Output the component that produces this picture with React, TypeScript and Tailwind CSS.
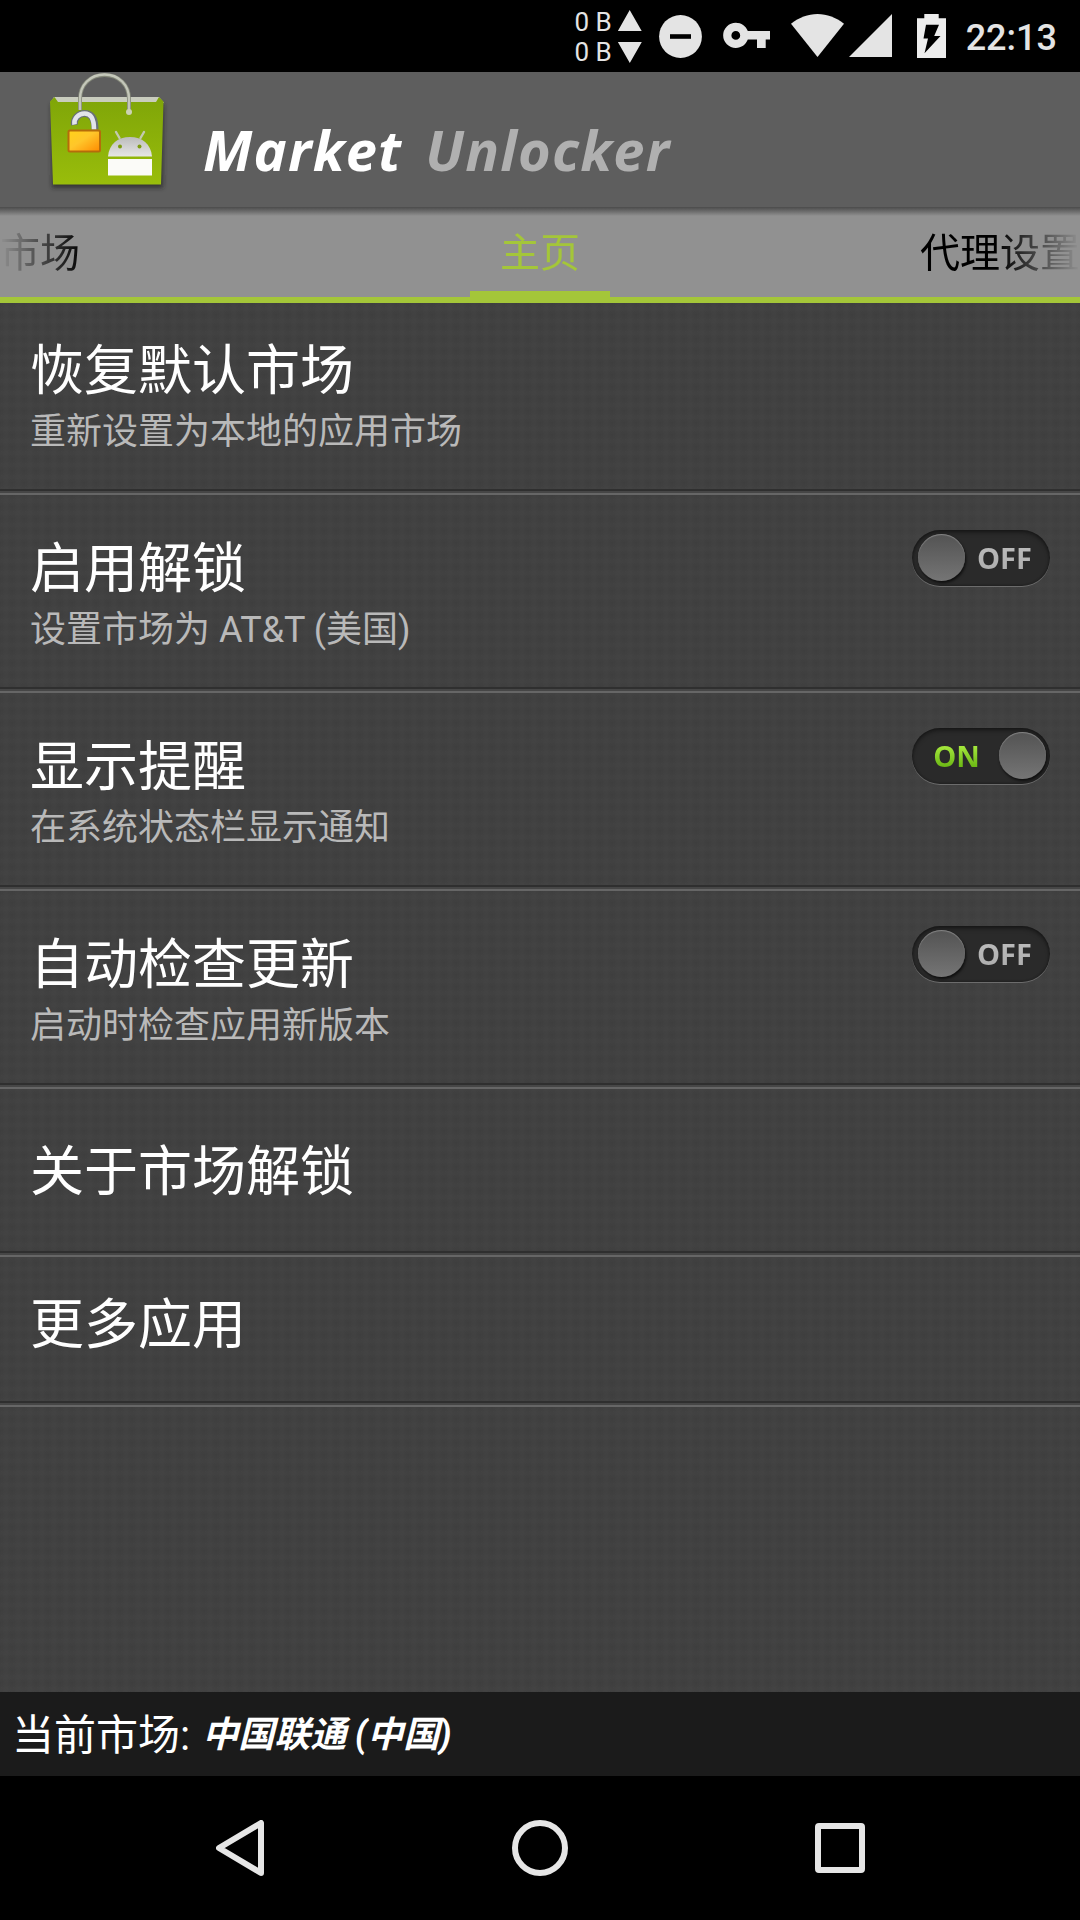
import { useState } from 'react'

type SettingRowProps = {
  title: string
  summary?: string
  checked?: boolean
  onToggle?: () => void
  className: string
}

function ToggleSwitch({ checked, onToggle }: { checked: boolean; onToggle?: () => void }) {
  return (
    <button
      type="button"
      role="switch"
      aria-checked={checked}
      onClick={onToggle}
      className={`flex h-14 w-[138px] shrink-0 items-center rounded-full bg-[#2a2a2a] shadow-[inset_0_3px_4px_rgba(0,0,0,0.35),inset_0_0_2px_1px_rgba(0,0,0,0.2),0_1px_0_#6c6c6c] ${checked ? 'flex-row-reverse pr-1 pl-1' : 'px-1.5'}`}
    >
      <span className="-mt-0.5 h-[47px] w-[47px] shrink-0 rounded-full bg-linear-to-b from-[#535353] to-[#757575] shadow-[1px_2px_3px_rgba(0,0,0,0.7),inset_0_1px_1px_#858585]" />
      <span
        className={`flex-1 bg-linear-to-b bg-clip-text font-['Open_Sans'] text-[29px] leading-10 font-bold text-transparent ${checked ? '-translate-x-px from-[#a5e83c] from-25% to-[#68b510] to-80%' : 'from-[#bfbfbf] to-[#aaaaaa]'}`}
      >
        {checked ? 'ON' : 'OFF'}
      </span>
    </button>
  )
}

function SettingRow({ title, summary, checked, onToggle, className }: SettingRowProps) {
  return (
    <li>
      <div className={`flex justify-between pr-[30px] pl-[30px] ${className}`}>
        <div>
          <h2 className="text-[54px] leading-[64px] text-white">{title}</h2>
          {summary && <p className="text-[36px] leading-[56px] text-[#b9b9b9]">{summary}</p>}
        </div>
        {checked !== undefined && (
          <div className="pt-[35px]">
            <ToggleSwitch checked={checked} onToggle={onToggle} />
          </div>
        )}
      </div>
      <div className="h-0.5 bg-[#2f2f2f]" />
      <div className="h-0.5 bg-[#464646]" />
      <div className="h-0.5 bg-[#666666]" />
    </li>
  )
}

function StatusBar() {
  return (
    <header className="flex h-[72px] items-center justify-end bg-black pr-[23px] text-[#e4e4e4]">
      <div className="flex flex-col pt-0.5 text-[26px] leading-[30px]">
        <span>0 B</span>
        <span>0 B</span>
      </div>
      <svg viewBox="617 0 24 72" className="ml-1.5 h-[72px] w-6" fill="currentColor" aria-hidden="true">
        <path d="M628.7 10 640.7 31H616.8ZM616.8 42h24l-12 21Z" />
      </svg>
      <svg viewBox="658 0 44 72" className="ml-[17px] h-[72px] w-11" aria-hidden="true">
        <circle cx="679.5" cy="36.5" r="21.4" fill="currentColor" />
        <path d="M669 36.5h21" stroke="#000" strokeWidth="4.6" />
      </svg>
      <svg viewBox="722 0 47 72" className="ml-5 h-[72px] w-[47px]" fill="currentColor" aria-hidden="true">
        <path
          fillRule="evenodd"
          d="M734.8 22.7c5.6 0 10 3.2 12 8.3H769v8.6h-4.3v8.4H756v-8.4h-9.2c-2 5.2-6.4 8.4-12 8.4a12.65 12.65 0 0 1 0-25.3Zm0 8.3a4.4 4.4 0 1 0 0 8.8 4.4 4.4 0 0 0 0-8.8Z"
        />
      </svg>
      <svg viewBox="790 0 54 72" className="ml-[21px] h-[72px] w-[54px]" fill="currentColor" aria-hidden="true">
        <path d="M790 23.8C798 17.5 807 14 816.5 14S835 17.5 843 23.8L816.5 57Z" />
      </svg>
      <svg viewBox="848 0 43 72" className="ml-1 h-[72px] w-[43px]" fill="currentColor" aria-hidden="true">
        <path d="M891 14v43h-43Z" />
      </svg>
      <svg viewBox="916 0 29 72" className="ml-[25px] h-[72px] w-[29px]" aria-hidden="true">
        <path d="M923.3 14h14.4v4.3h7.3v39.7h-29V18.3h7.3Z" fill="#ededed" />
        <path d="M925 24.8h13l-4.8 11.2h6.3l-16 17.2 3.5-14.7h-4.5Z" fill="#000" />
      </svg>
      <time className="ml-5 pt-1 text-[36px] font-medium">22:13</time>
    </header>
  )
}

function BagLogo() {
  return (
    <svg viewBox="40 72 140 125" className="h-[125px] w-[140px]" aria-hidden="true">
      <defs>
        <linearGradient id="bag" x1="0" y1="0" x2="0" y2="1">
          <stop offset="0" stopColor="#7fa508" />
          <stop offset="1" stopColor="#99bd0b" />
        </linearGradient>
        <linearGradient id="lock" x1="0" y1="0" x2="1" y2="1">
          <stop offset="0" stopColor="#ffd21a" />
          <stop offset="0.45" stopColor="#ffc62a" />
          <stop offset="1" stopColor="#ff8a00" />
        </linearGradient>
        <linearGradient id="robot" x1="0" y1="0" x2="0" y2="1">
          <stop offset="0" stopColor="#bcbcbc" />
          <stop offset="1" stopColor="#e6e6e6" />
        </linearGradient>
        <filter id="soft" x="-20%" y="-20%" width="140%" height="140%">
          <feGaussianBlur stdDeviation="2" />
        </filter>
      </defs>
      <path d="M51 104h113l-1 84H52Z" fill="#222" opacity="0.65" filter="url(#soft)" />
      <path d="M54 97h105l5 6H50Z" fill="#c9ccbe" />
      <path d="M50 101.5 54.500 97l3.500 5h98l3-5 4.500 4.500-2.500 83H53Z" fill="url(#bag)" />
      <path d="M80 110V99C80 85 90 75 104.500 75S129 85 129 99v12" fill="none" stroke="#85897a" strokeWidth="4" />
      <path d="M80 110V99C80 85 90 74.500 104.500 74.500S129 85 129 99v12" fill="none" stroke="#c4c7ba" strokeWidth="2.4" />
      <circle cx="129" cy="112" r="3" fill="#ccd2b4" />
      <path d="M74.500 125c-1-6 3.500-11.500 10-11.500 7 0 10.500 5 10.500 16" fill="none" stroke="#697078" strokeWidth="7" />
      <path d="M74.500 124.500c-1-6 4-11 10-11 6.500 0 9.500 4.500 9.500 16" fill="none" stroke="#e2e4ea" strokeWidth="4.6" />
      <rect x="68.500" y="130.500" width="31.500" height="21" rx="1.500" fill="url(#lock)" stroke="#b56c0a" strokeWidth="2" />
      <path d="m116 132 3.500 6M144 132l-3.500 6" stroke="#c3c9b0" strokeWidth="2.4" strokeLinecap="round" />
      <path d="M108 156.500C109 144 118 137 130 137s21 7 22 19.500Z" fill="url(#robot)" />
      <circle cx="120" cy="146.500" r="2" fill="#7d9c12" />
      <circle cx="139.500" cy="146.500" r="2" fill="#7d9c12" />
      <path d="M108 159h44v16.500h-44Z" fill="#fbfbf8" />
    </svg>
  )
}

function TabStrip() {
  return (
    <nav className="flex h-24 flex-col justify-between border-b-[6px] border-[#a4c639] bg-[#919191] bg-linear-to-b from-[#4b4b4b] to-[#919191] to-[9px]">
      <div className="flex h-[84px] items-center justify-between pt-[9px] text-[40px] text-black mask-[linear-gradient(to_right,transparent,black_84px,black_996px,transparent)]">
        <span className="w-40">市场</span>
        <span className="text-[#a4c639]">主页</span>
        <span className="w-40 whitespace-nowrap">代理设置</span>
      </div>
      <div className="h-1.5 w-[140px] self-center bg-[#a4c639]" />
    </nav>
  )
}

export default function App() {
  const [unlockEnabled, setUnlockEnabled] = useState(false)
  const [noticeEnabled, setNoticeEnabled] = useState(true)
  const [autoUpdate, setAutoUpdate] = useState(false)

  return (
    <div className="flex h-[1920px] w-[1080px] flex-col overflow-hidden bg-black font-[Roboto,'Noto_Sans_CJK_SC',sans-serif]">
      <StatusBar />

      <div className="flex h-[135px] bg-[#5e5e5e] pl-10">
        <BagLogo />
        <h1 className="flex gap-[23px] pt-[37px] pl-[23px] font-['Open_Sans'] text-[56px] leading-[80px] font-bold tracking-[1.2px] whitespace-nowrap text-white italic">
          <span>Market</span>
          <span className="text-[#b0b0b0]">Unlocker</span>
        </h1>
      </div>

      <TabStrip />

      <ul className="flex-1 bg-[#414141] bg-[radial-gradient(circle,#434343_0,transparent_5px),radial-gradient(circle,#3e3e3e_0,transparent_5px)] bg-[length:12px_12px] bg-[position:0_0,6px_6px]">
        <SettingRow title="恢复默认市场" summary="重新设置为本地的应用市场" className="h-[186px] pt-[37px]" />
        <SettingRow
          title="启用解锁"
          summary="设置市场为 AT&T (美国)"
          checked={unlockEnabled}
          onToggle={() => setUnlockEnabled(!unlockEnabled)}
          className="h-48 [&>div:first-child]:pt-[43px]"
        />
        <SettingRow
          title="显示提醒"
          summary="在系统状态栏显示通知"
          checked={noticeEnabled}
          onToggle={() => setNoticeEnabled(!noticeEnabled)}
          className="h-48 [&>div:first-child]:pt-[43px]"
        />
        <SettingRow
          title="自动检查更新"
          summary="启动时检查应用新版本"
          checked={autoUpdate}
          onToggle={() => setAutoUpdate(!autoUpdate)}
          className="h-48 [&>div:first-child]:pt-[43px]"
        />
        <SettingRow title="关于市场解锁" className="h-[162px] items-center pt-[5px]" />
        <SettingRow title="更多应用" className="h-36 items-center pb-[7px]" />
      </ul>

      <div className="flex h-[84px] items-center bg-[#1b1b1b] pt-0.5 pl-3 text-white">
        <span className="text-[42px]">当前市场:</span>
        <span className="pl-3 text-[36px] font-bold italic">中国联通 (中国)</span>
      </div>

      <div className="flex h-36 items-center gap-[247.5px] pl-[216px] text-[#e6e6e6]">
        <svg viewBox="0 0 48 56" className="h-14 w-12" fill="none" stroke="currentColor" strokeWidth="6" strokeLinejoin="round" aria-hidden="true">
          <path d="M45 3v50L3 28Z" />
        </svg>
        <div className="h-14 w-14 rounded-full border-[6px] border-current" />
        <div className="h-[50px] w-[50px] rounded-[4px] border-[6px] border-current" />
      </div>
    </div>
  )
}
